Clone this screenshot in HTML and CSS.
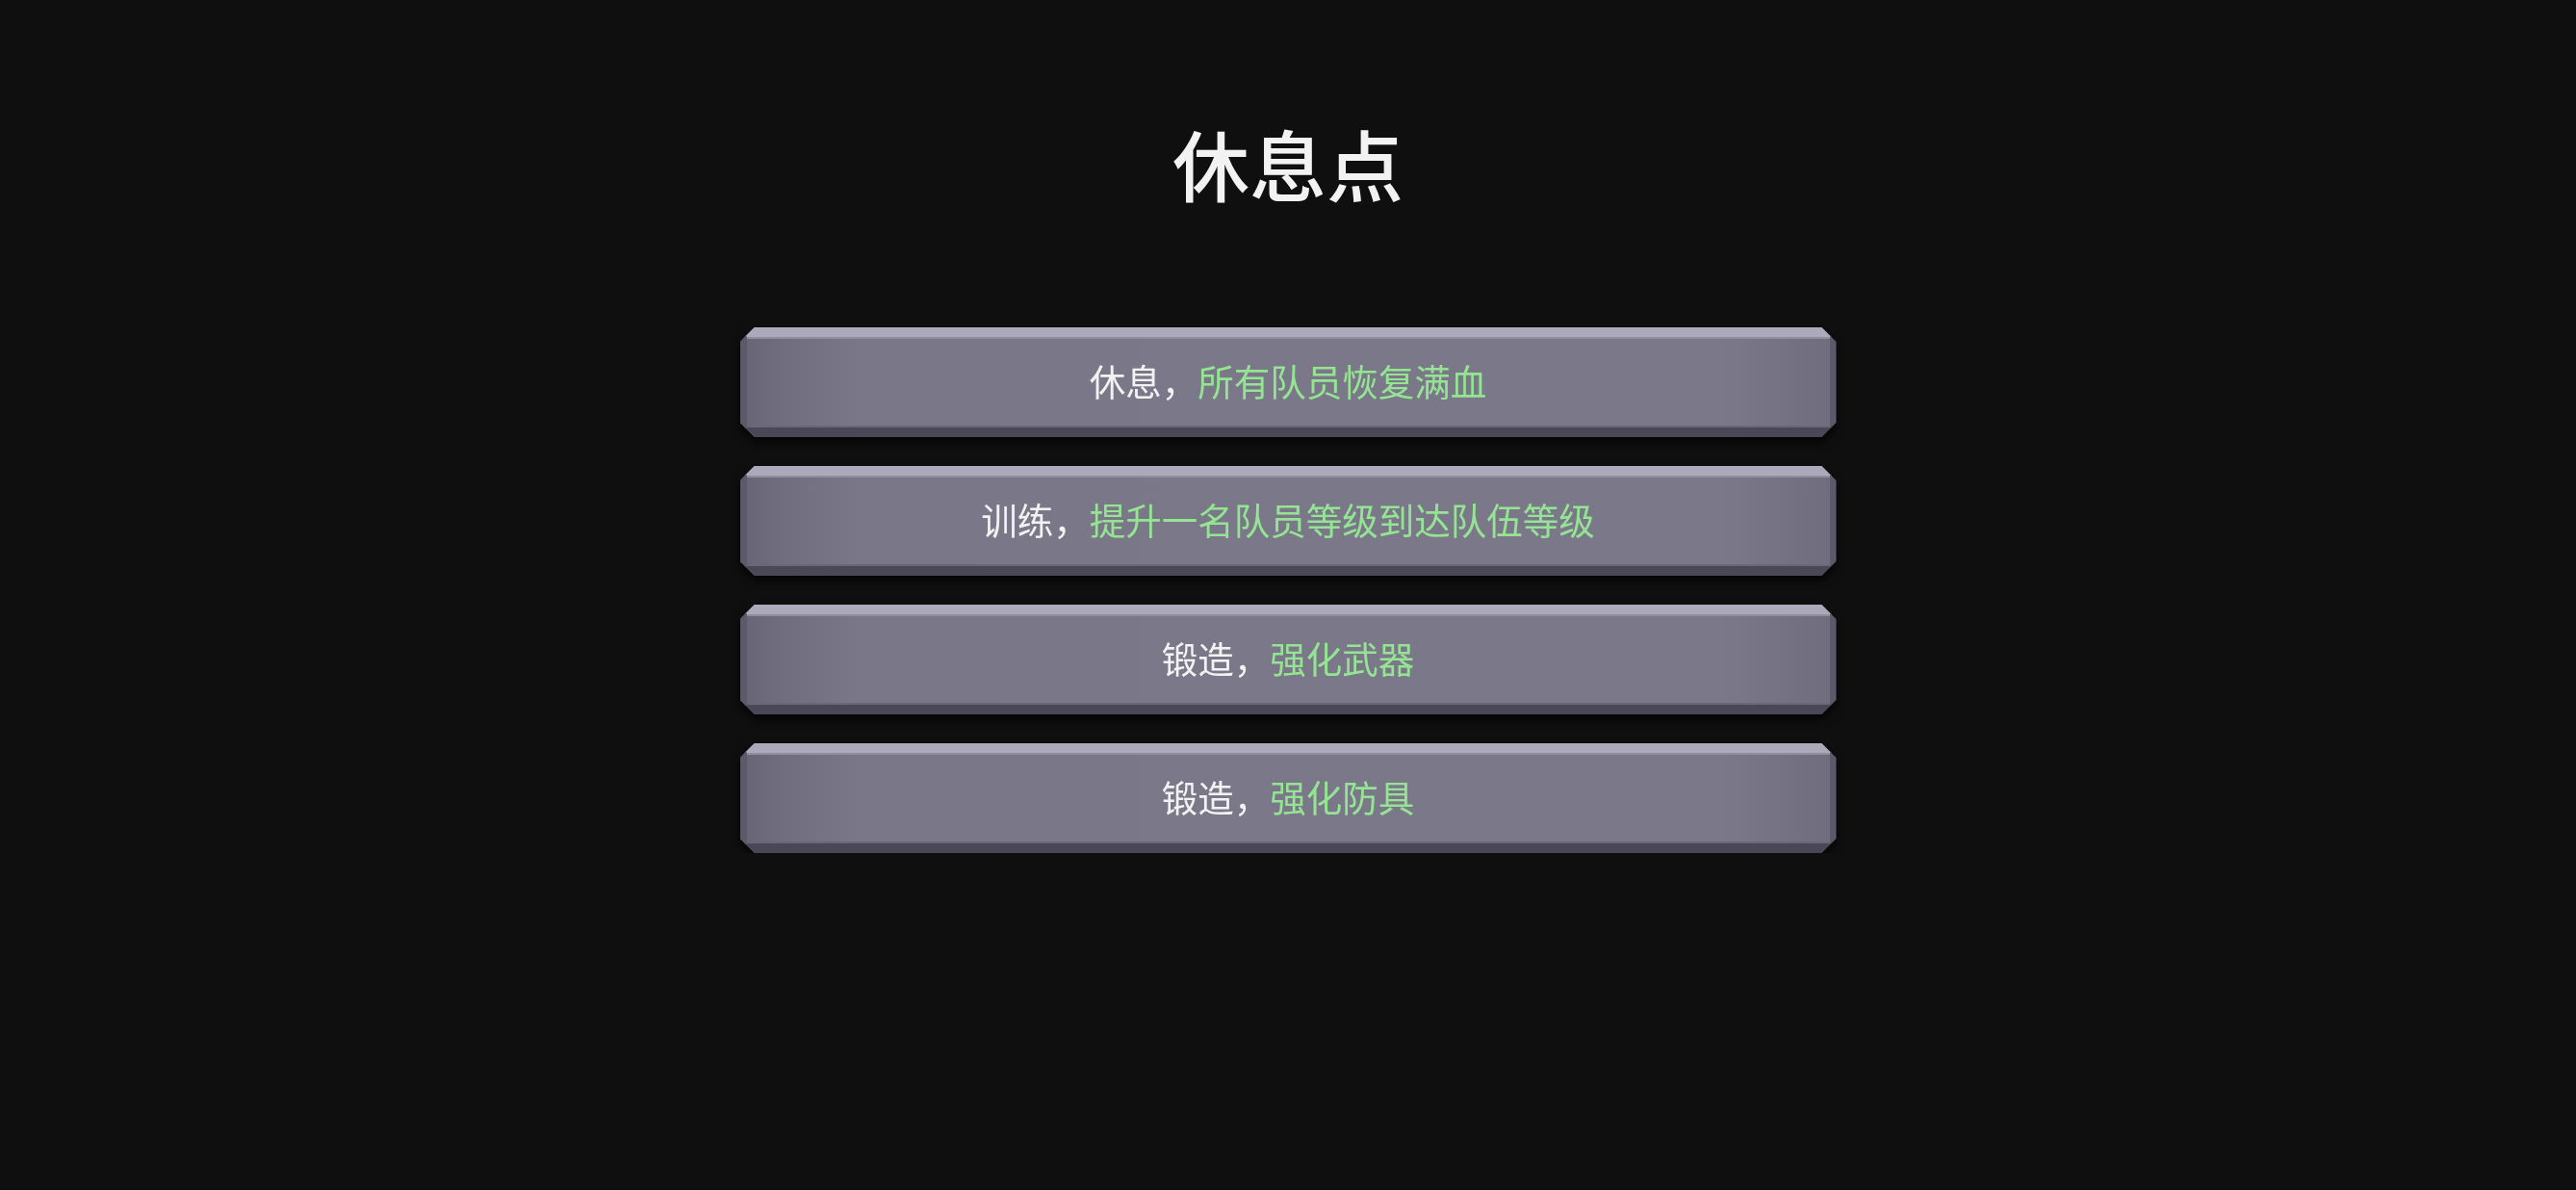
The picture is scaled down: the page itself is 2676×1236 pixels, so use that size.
FILE: index.html
```html
<!DOCTYPE html>
<html lang="zh-CN">
<head>
    <meta charset="utf-8" />
    <title>休息点</title>
    <link rel="stylesheet" href="styles.css">
</head>
<body>

    <h1 class="title">休息点</h1>

    <section class="options">
        <div class="option">
            <button class="option-face">休息，<span class="hint">所有队员恢复满血</span></button>
        </div>
        <div class="option">
            <button class="option-face">训练，<span class="hint">提升一名队员等级到达队伍等级</span></button>
        </div>
        <div class="option">
            <button class="option-face">锻造，<span class="hint">强化武器</span></button>
        </div>
        <div class="option">
            <button class="option-face">锻造，<span class="hint">强化防具</span></button>
        </div>
    </section>

</body>
</html>
```

FILE: styles.css
```css
body{
    margin: 0;
    background: #0f0f0f;
    font-family: "Noto Sans CJK SC", "Noto Sans", sans-serif;
    color: #f2f2f2;
}

.title{
    margin: 128px 0 0;
    font-size: 80px;
    line-height: 80px;
    font-weight: 500;
    text-align: center;
}

.options{
    width: 1139px;
    margin: 132px auto 0;
    display: flex;
    flex-direction: column;
    gap: 30px;
}

/* wrapper carries the shadow, since the face itself is clipped */
.option{
    filter: drop-shadow(0 5px 5px rgba(0,0,0,0.75));
}

.option-face{
    display: flex;
    align-items: center;
    justify-content: center;
    width: 100%;
    height: 114px;
    padding: 0 0 6px;
    border-style: solid;
    border-width: 10px 7px 10px 7px;
    border-color: #aba9ba #5c5a6a #4a4856 #5c5a6a;
    background: linear-gradient(to right, #686676 0px, #716f7f 40px, #7a7888 120px, #7b7989 90%, #706e7e 100%);
    box-shadow: inset 0 2px 0 #8f8d9e, inset 0 -2px 0 #6a6878;
    clip-path: polygon(15px 0, calc(100% - 15px) 0, 100% 15px, 100% calc(100% - 15px), calc(100% - 15px) 100%, 15px 100%, 0 calc(100% - 15px), 0 15px);
    font-family: inherit;
    font-size: 37.5px;
    color: #f2f2f2;
    cursor: pointer;
}

.option-face:hover{
    filter: brightness(1.08);
}

.hint{
    color: #94e494;
}
```
